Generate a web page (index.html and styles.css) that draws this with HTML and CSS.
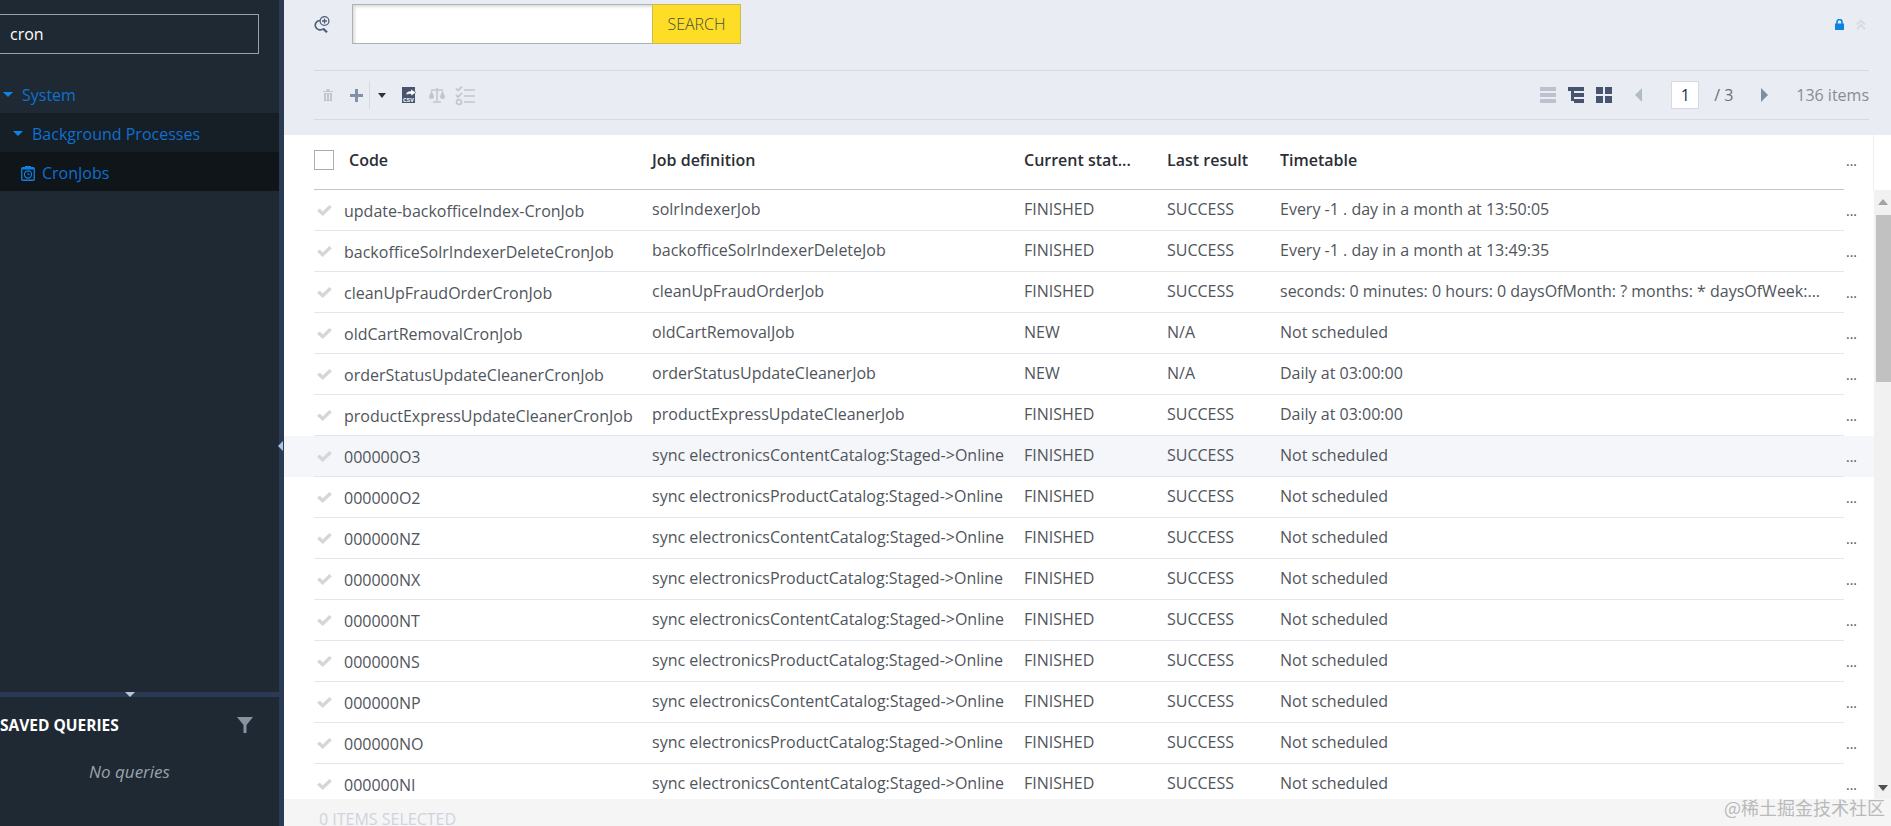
FILE: index.html
```html
<!DOCTYPE html>
<html lang="en">
<head>
<meta charset="utf-8">
<title>CronJobs</title>
<link rel="stylesheet" href="styles.css">
</head>
<body>
<div class="app">
  <aside class="sidebar">
    <div class="tree-panel">
      <div class="filter"><input class="filter-input" type="text" value="cron"></div>
      <div class="node level-0"><span class="caret"></span><span>System</span></div>
      <div class="node level-1"><span class="caret"></span><span>Background Processes</span></div>
      <div class="node level-2">
        <svg class="cron-icon" width="14" height="16" viewBox="0 0 14 16"><path d="M4 2.500V1h6v1.500" fill="#0f80e0"/><rect x="0.750" y="2.750" width="12.500" height="12.500" rx="1" fill="none" stroke="#0f80e0" stroke-width="1.300"/><rect x="1" y="2.500" width="12" height="2" fill="#0f80e0"/><circle cx="7" cy="9.500" r="3.600" fill="none" stroke="#0f80e0" stroke-width="1.200"/><path d="M7 7.500v2h1.600" fill="none" stroke="#0f80e0"/></svg>
        <span>CronJobs</span>
      </div>
    </div>
    <div class="queries">
      <span class="queries-handle"></span>
      <div class="queries-head">
        <span>SAVED QUERIES</span>
        <svg width="16" height="16" viewBox="0 0 16 16"><path d="M0 0h16L9.500 8v8h-3V8z" fill="#8793a3"/></svg>
      </div>
      <div class="queries-empty">No queries</div>
    </div>
  </aside>
  <div class="splitter"><span class="splitter-handle"></span></div>
  <main class="main">
    <section class="top">
      <div class="search-row">
        <svg class="search-icon" width="16" height="17" viewBox="0 0 16 17"><path d="M6 4.500a4.700 4.700 0 1 0 3 8.300" fill="none" stroke="#4f6079" stroke-width="1.700"/><path d="M9 12.500l4 3.800" stroke="#4f6079" stroke-width="2.300"/><circle cx="10.500" cy="5" r="4.400" fill="#e9ecf2" stroke="#4f6079" stroke-width="1.300"/><path d="M10.500 2.500v5M8 5h5" stroke="#4f6079" stroke-width="1.300"/></svg>
        <input class="search-input" type="text">
        <button class="search-button">SEARCH</button>
        <div class="top-right">
          <svg width="9" height="11" viewBox="0 0 9 11"><path d="M2 5V3a2.500 2.500 0 0 1 5 0v2" fill="none" stroke="#0a84e0" stroke-width="1.600"/><rect y="4.500" width="9" height="6.500" fill="#0a84e0"/></svg>
          <svg width="10" height="11" viewBox="0 0 10 11"><path d="M1 5.500L5 1.500l4 4M1 10L5 6l4 4" fill="none" stroke="#d6dbe5" stroke-width="1.800"/></svg>
        </div>
      </div>
      <div class="toolbar">
        <div class="tools">
          <svg class="t-trash" width="10" height="12" viewBox="0 0 10 12"><path d="M0 2h10v1H0zM3.500 0h3v2h-3z" fill="#c0c5d0"/><path d="M1 4h8v8H1z" fill="#c0c5d0"/><path d="M3.500 5v6M6.500 5v6" stroke="#e9ecf2"/></svg>
          <svg class="t-plus" width="13" height="13" viewBox="0 0 13 13"><path d="M5 0h3v5h5v3H8v5H5V8H0V5h5z" fill="#8291a8"/></svg>
          <span class="t-sep"></span>
          <span class="t-caret"></span>
          <svg class="t-csv" width="14" height="16" viewBox="0 0 14 16"><rect width="13" height="16" fill="#47546f"/><path d="M4 8c0-3 2-4 5-4V2l5 3.500L9 9V7C7 7 5 7 4 8z" fill="#fff" stroke="#47546f" stroke-width=".5"/><text x="1" y="15" class="csv-text">CSV</text></svg>
          <svg class="t-scale" width="16" height="16" viewBox="0 0 16 16"><path d="M8 1v13M2 3h12M4 15h8" stroke="#c0c5d0" stroke-width="1.500" fill="none"/><path d="M0 9.500l2.500-6 2.500 6a2.500 2.500 0 0 1-5 0zM11 9.500l2.500-6 2.500 6a2.500 2.500 0 0 1-5 0z" fill="#c0c5d0"/></svg>
          <svg class="t-check" width="20" height="19" viewBox="0 0 20 19"><path d="M1 2.500l2 2 4-4M1 9l2 2 4-4" fill="none" stroke="#c0c5d0" stroke-width="1.700"/><circle cx="4" cy="16" r="2.500" fill="none" stroke="#c0c5d0" stroke-width="1.700"/><path d="M9 4h11M9 10h11M9 16h11" stroke="#c0c5d0" stroke-width="1.700"/></svg>
        </div>
        <div class="pager">
          <svg class="p-list" width="16" height="16" viewBox="0 0 16 16"><path d="M0 0h16v4H0zM0 6h16v4H0zM0 12h16v4H0z" fill="#bcc1cd"/></svg>
          <svg class="p-tree" width="16" height="16" viewBox="0 0 16 16"><path d="M0 0h16v4H0zM3 4h3v10h-3zM6 6h10v4H6zM6 12h10v4H6z" fill="#47546f"/></svg>
          <svg class="p-grid" width="16" height="16" viewBox="0 0 16 16"><path d="M0 0h7v7H0zM9 0h7v7H9zM0 9h7v7H0zM9 9h7v7H9z" fill="#47546f"/></svg>
          <span class="p-prev"></span>
          <span class="p-page">1</span>
          <span class="p-total">/ 3</span>
          <span class="p-next"></span>
          <span class="p-items">136 items</span>
        </div>
      </div>
    </section>
    <section class="list">
      <div class="head">
        <div class="head-cells">
          <span class="checkbox"></span>
          <span>Code</span>
          <span>Job definition</span>
          <span>Current stat...</span>
          <span>Last result</span>
          <span>Timetable</span>
        </div>
        <span class="more">...</span>
      </div>
      <div class="body">
        <div class="rows">
          <div class="row"><div class="cells"><span class="tick"></span><span class="code">update-backofficeIndex-CronJob</span><span>solrIndexerJob</span><span>FINISHED</span><span>SUCCESS</span><span>Every -1 . day in a month at 13:50:05</span></div><span class="more">...</span></div>
          <div class="row"><div class="cells"><span class="tick"></span><span class="code">backofficeSolrIndexerDeleteCronJob</span><span>backofficeSolrIndexerDeleteJob</span><span>FINISHED</span><span>SUCCESS</span><span>Every -1 . day in a month at 13:49:35</span></div><span class="more">...</span></div>
          <div class="row"><div class="cells"><span class="tick"></span><span class="code">cleanUpFraudOrderCronJob</span><span>cleanUpFraudOrderJob</span><span>FINISHED</span><span>SUCCESS</span><span>seconds: 0 minutes: 0 hours: 0 daysOfMonth: ? months: * daysOfWeek:...</span></div><span class="more">...</span></div>
          <div class="row"><div class="cells"><span class="tick"></span><span class="code">oldCartRemovalCronJob</span><span>oldCartRemovalJob</span><span>NEW</span><span>N/A</span><span>Not scheduled</span></div><span class="more">...</span></div>
          <div class="row"><div class="cells"><span class="tick"></span><span class="code">orderStatusUpdateCleanerCronJob</span><span>orderStatusUpdateCleanerJob</span><span>NEW</span><span>N/A</span><span>Daily at 03:00:00</span></div><span class="more">...</span></div>
          <div class="row"><div class="cells"><span class="tick"></span><span class="code">productExpressUpdateCleanerCronJob</span><span>productExpressUpdateCleanerJob</span><span>FINISHED</span><span>SUCCESS</span><span>Daily at 03:00:00</span></div><span class="more">...</span></div>
          <div class="row hover"><div class="cells"><span class="tick"></span><span class="code">000000O3</span><span>sync electronicsContentCatalog:Staged-&gt;Online</span><span>FINISHED</span><span>SUCCESS</span><span>Not scheduled</span></div><span class="more">...</span></div>
          <div class="row"><div class="cells"><span class="tick"></span><span class="code">000000O2</span><span>sync electronicsProductCatalog:Staged-&gt;Online</span><span>FINISHED</span><span>SUCCESS</span><span>Not scheduled</span></div><span class="more">...</span></div>
          <div class="row"><div class="cells"><span class="tick"></span><span class="code">000000NZ</span><span>sync electronicsContentCatalog:Staged-&gt;Online</span><span>FINISHED</span><span>SUCCESS</span><span>Not scheduled</span></div><span class="more">...</span></div>
          <div class="row"><div class="cells"><span class="tick"></span><span class="code">000000NX</span><span>sync electronicsProductCatalog:Staged-&gt;Online</span><span>FINISHED</span><span>SUCCESS</span><span>Not scheduled</span></div><span class="more">...</span></div>
          <div class="row"><div class="cells"><span class="tick"></span><span class="code">000000NT</span><span>sync electronicsContentCatalog:Staged-&gt;Online</span><span>FINISHED</span><span>SUCCESS</span><span>Not scheduled</span></div><span class="more">...</span></div>
          <div class="row"><div class="cells"><span class="tick"></span><span class="code">000000NS</span><span>sync electronicsProductCatalog:Staged-&gt;Online</span><span>FINISHED</span><span>SUCCESS</span><span>Not scheduled</span></div><span class="more">...</span></div>
          <div class="row"><div class="cells"><span class="tick"></span><span class="code">000000NP</span><span>sync electronicsContentCatalog:Staged-&gt;Online</span><span>FINISHED</span><span>SUCCESS</span><span>Not scheduled</span></div><span class="more">...</span></div>
          <div class="row"><div class="cells"><span class="tick"></span><span class="code">000000NO</span><span>sync electronicsProductCatalog:Staged-&gt;Online</span><span>FINISHED</span><span>SUCCESS</span><span>Not scheduled</span></div><span class="more">...</span></div>
          <div class="row"><div class="cells"><span class="tick"></span><span class="code">000000NI</span><span>sync electronicsContentCatalog:Staged-&gt;Online</span><span>FINISHED</span><span>SUCCESS</span><span>Not scheduled</span></div><span class="more">...</span></div>
        </div>
        <div class="scrollbar">
          <span class="sb-up"></span>
          <span class="sb-thumb"></span>
          <span class="sb-down"></span>
        </div>
      </div>
      <div class="footer">0 ITEMS SELECTED</div>
      <span class="watermark">@稀土掘金技术社区</span>
    </section>
  </main>
</div>
</body>
</html>
```
FILE: styles.css
```css
* { box-sizing: border-box; }
html, body { margin: 0; height: 100%; overflow: hidden; }
body { font-family: "Open Sans", "Noto Sans", sans-serif; font-size: 16px; color: #4a4f57; background: #fff; }
.app { display: flex; height: 826px; }

/* sidebar */
.sidebar { width: 279px; background: #1f2933; display: flex; flex-direction: column; flex-shrink: 0; }
.tree-panel { flex: 1; }
.filter { padding: 14px 20px 0 0; height: 74px; }
.filter-input { display: block; height: 40px; margin-left: -1px; width: 260px; background: #1f2933; border: 1px solid #9aa0a6; color: #fff; font: 16px "Open Sans", sans-serif; padding: 0 0 0 10px; outline: 0; }
.node { height: 39px; display: flex; align-items: center; padding-top: 2px; color: #0e70d0; font-size: 16px; }
.level-1 { padding-left: 13px; background: #161e26; }
.level-0 { padding-left: 3px; }
.level-2 { padding-left: 21px; background: #0f1519; }
.caret { width: 0; height: 0; border: 5px solid transparent; border-top: 5px solid #0d84e6; border-bottom: 0; margin-right: 9px; }
.cron-icon { margin-right: 7px; margin-top: 0; }
.queries { height: 134px; border-top: 5px solid #2a3a52; position: relative; }
.queries-handle { position: absolute; left: 125px; top: -5px; border: 5px solid transparent; border-top: 5px solid #b9c4d3; border-bottom: 0; }
.queries-head { display: flex; justify-content: space-between; align-items: center; padding: 8px 26px 0 0; color: #fff; font-weight: 700; font-size: 15.500px; height: 47px; }
.queries-empty { text-align: center; margin-top: 16px; padding-right: 20px; color: #9ba3ad; font-style: italic; font-size: 17px; }
.splitter { width: 5px; background: #2a3a52; flex-shrink: 0; position: relative; }
.splitter-handle { position: absolute; left: -1px; top: 441px; border: 5px solid transparent; border-right: 5px solid #a9c4e4; border-left: 0; }

/* top */
.main { flex: 1; min-width: 0; display: flex; flex-direction: column; }
.top { height: 135px; background: #e9ecf2; padding: 0 22px 0 30px; flex-shrink: 0; }
.search-row { height: 71px; padding-top: 4px; display: flex; align-items: flex-start; border-bottom: 1px solid #d5d9e0; }
.search-icon { margin-top: 12px; margin-right: 22px; flex-shrink: 0; }
.search-input { width: 300px; height: 40px; border: 1px solid #adb0b5; border-right: 0; background: #fff; box-shadow: inset 2px 2px 3px #ddd; outline: 0; padding: 0; }
.search-button { width: 89px; height: 40px; background: #fddd26; border: 1px solid #c9bb5c; color: #4a4c3d; font: 300 16px "Open Sans", sans-serif; padding: 0; }
.top-right { margin-left: auto; display: flex; gap: 12px; padding: 15px 3px 0 0; }
.toolbar { height: 49px; display: flex; justify-content: space-between; align-items: center; border-bottom: 1px solid #d5d9e0; }
.tools, .pager { display: flex; align-items: center; }
.t-trash { margin-left: 9px; }
.t-plus { margin-left: 17px; }
.t-sep { width: 1px; height: 28px; background: #d5d9e0; margin-left: 6px; }
.t-caret { border: 4px solid transparent; border-top: 5px solid #333; border-bottom: 0; margin-left: 8px; }
.t-csv { margin-left: 16px; }
.csv-text { font: 700 6px "Liberation Mono", monospace; fill: #fff; }
.t-scale { margin-left: 13px; }
.t-check { margin-left: 10px; }
.p-tree { margin-left: 12px; }
.p-grid { margin-left: 12px; }
.p-prev { border: 7px solid transparent; border-left: 0; border-right: 7px solid #b1bcc9; margin-left: 23px; }
.p-page { width: 28px; height: 28px; margin-left: 29px; background: #fff; border: 1px solid #d5d9e0; text-align: center; line-height: 26px; color: #1c2c50; font-size: 16px; }
.p-total { margin-left: 15px; font-size: 16px; color: #6b7078; width: 47px; }
.p-next { border: 7px solid transparent; border-right: 0; border-left: 7px solid #7e8da1; }
.p-items { margin-left: 28px; font-size: 16px; color: #888c92; }

/* list */
.list { flex: 1; min-height: 0; display: flex; flex-direction: column; position: relative; }
.head { height: 55px; display: flex; padding-left: 30px; flex-shrink: 0; }
.head-cells { width: 1530px; display: grid; grid-template-columns: 35px 303px 372px 143px 113px 1fr; align-items: center; padding-bottom: 4px; border-bottom: 1px solid #c1c6cc; color: #2b2f35; font-weight: 600; font-size: 16px; }
.head .more { border-right: 1px solid #f0f0f0; padding-bottom: 4px; }
.checkbox { width: 20px; height: 20px; border: 1px solid #a9acb0; display: block; }
.body { flex: 1; min-height: 0; display: flex; overflow: hidden; }
.rows { flex: 1; min-width: 0; overflow: hidden; }
.row { height: 41px; display: flex; padding-left: 30px; }
.row.hover { background: #f5f6f9; }
.cells { width: 1530px; display: grid; grid-template-columns: 30px 308px 372px 143px 113px 1fr; align-items: center; padding-bottom: 2px; border-bottom: 1px solid #e1e7ef; font-size: 16px; color: #50555c; }
.cells > span { white-space: nowrap; }
.cells > .code { padding-top: 3px; }
.cells > .tick { display: block; width: 15px; height: 11px; margin: 3px 0 0 3px; background: #d6d6d6; clip-path: polygon(0 52%, 19% 32%, 38% 58%, 82% 0, 100% 20%, 38% 100%); }
.more { width: 30px; padding-left: 2px; display: flex; align-items: center; color: #50555c; font-size: 14px; }
.scrollbar { width: 17px; flex-shrink: 0; background: #f1f1f1; display: flex; flex-direction: column; align-items: center; }
.sb-up { height: 25px; width: 100%; }
.sb-up::after { content: ""; display: block; width: 0; margin: 9px auto 0; border: 5px solid transparent; border-top: 0; border-bottom: 6px solid #a3a3a3; }
.sb-thumb { height: 167px; width: 15px; margin-left: 2px; background: #c1c1c1; }
.sb-down { margin-top: auto; margin-bottom: 8px; border: 5px solid transparent; border-bottom: 0; border-top: 6px solid #505050; }
.footer { height: 27px; background: #f5f5f5; padding: 11px 0 0 35px; color: #cfd3dd; font-size: 16px; line-height: 18px; flex-shrink: 0; }
.watermark { position: absolute; right: 6px; bottom: 6px; color: #b9b9b9; font-family: "Noto Sans CJK SC", sans-serif; font-size: 18px; }
```
